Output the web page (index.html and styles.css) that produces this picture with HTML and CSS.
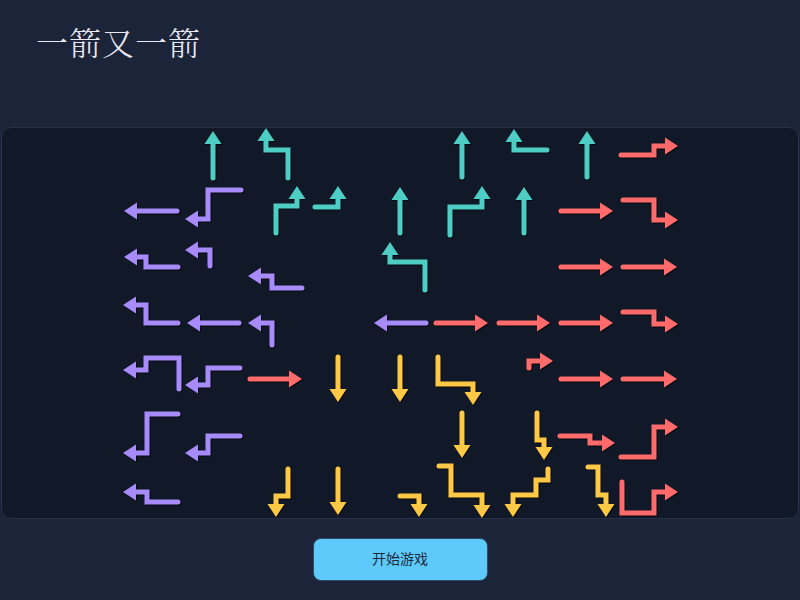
FILE: index.html
```html
<!DOCTYPE html>
<html lang="zh-CN">
<head>
    <meta charset="UTF-8">
    <meta name="viewport" content="width=device-width, initial-scale=1.0">
    <title>一箭又一箭</title>
    <link rel="stylesheet" href="styles.css">
</head>
<body>
    <h1 class="title">一箭又一箭</h1>

    <div class="board">
        <svg class="arrows" id="arrows" viewBox="2 128 796 390" width="796" height="390"></svg>
    </div>

    <div class="actions">
        <button class="start-btn" type="button">开始游戏</button>
    </div>

    <script>
        // 关卡数据：每支箭是一串折点，最后一个点是箭头尖
        const level = {
            '#4ecdc4': [
                [[213,180],[213,131]],
                [[288,180],[288,150],[266,150],[266,128]],
                [[276,235],[276,206],[297,206],[297,186]],
                [[313,207],[338,207],[338,186]],
                [[400,235],[400,187]],
                [[462,179],[462,131]],
                [[450,237],[450,207],[482,207],[482,186]],
                [[425,292],[425,262],[390,262],[390,242]],
                [[549,150],[514,150],[514,129]],
                [[587,179],[587,131]],
                [[524,235],[524,187]]
            ],
            '#a78bfa': [
                [[243,190],[208,190],[208,219],[185,219]],
                [[179,211],[124,211]],
                [[210,268],[210,250],[185,250]],
                [[180,267],[146,267],[146,257],[124,257]],
                [[304,288],[272,288],[272,276],[248,276]],
                [[180,323],[146,323],[146,305],[123,305]],
                [[241,323],[187,323]],
                [[272,347],[272,323],[248,323]],
                [[179,391],[179,358],[146,358],[146,370],[123,370]],
                [[242,368],[208,368],[208,385],[185,385]],
                [[428,323],[374,323]],
                [[180,414],[147,414],[147,453],[123,453]],
                [[242,436],[208,436],[208,453],[185,453]],
                [[180,502],[147,502],[147,492],[123,492]]
            ],
            '#ff6b6b': [
                [[619,155],[654,155],[654,146],[678,146]],
                [[559,211],[613,211]],
                [[621,200],[654,200],[654,220],[678,220]],
                [[559,267],[613,267]],
                [[621,267],[677,267]],
                [[434,323],[488,323]],
                [[497,323],[550,323]],
                [[559,323],[613,323]],
                [[621,312],[654,312],[654,324],[678,324]],
                [[529,370],[529,361],[553,361]],
                [[559,379],[613,379]],
                [[621,379],[677,379]],
                [[248,379],[302,379]],
                [[558,436],[590,436],[590,443],[615,443]],
                [[619,457],[654,457],[654,427],[678,427]],
                [[622,480],[622,513],[654,513],[654,492],[678,492]]
            ],
            '#ffc845': [
                [[338,355],[338,402]],
                [[400,355],[400,402]],
                [[438,355],[438,384],[473,384],[473,405]],
                [[462,411],[462,458]],
                [[338,467],[338,515]],
                [[398,496],[419,496],[419,517]],
                [[437,466],[451,466],[451,495],[482,495],[482,518]],
                [[288,467],[288,496],[276,496],[276,517]],
                [[537,411],[537,440],[544,440],[544,460]],
                [[548,467],[548,480],[536,480],[536,495],[513,495],[513,517]],
                [[586,467],[598,467],[598,495],[606,495],[606,517]]
            ]
        };

        const NS = 'http://www.w3.org/2000/svg';
        const HEAD_LEN = 13;
        const HEAD_HALF = 8.5;

        function drawArrow(svg, pts, color) {
            const tip = pts[pts.length - 1];
            const prev = pts[pts.length - 2];
            const dx = Math.sign(tip[0] - prev[0]);
            const dy = Math.sign(tip[1] - prev[1]);
            const base = [tip[0] - dx * HEAD_LEN, tip[1] - dy * HEAD_LEN];

            // 尾部往里收一点，给圆头留位置
            const first = pts[0], second = pts[1];
            const tx = Math.sign(second[0] - first[0]);
            const ty = Math.sign(second[1] - first[1]);
            const line = [[first[0] + tx * 2, first[1] + ty * 2]]
                .concat(pts.slice(1, -1))
                .concat([[base[0] + dx, base[1] + dy]]);

            const path = document.createElementNS(NS, 'path');
            path.setAttribute('d', 'M' + line.map(p => p.join(' ')).join(' L'));
            path.setAttribute('stroke', color);
            path.setAttribute('class', 'shaft');
            svg.appendChild(path);

            const head = document.createElementNS(NS, 'polygon');
            const nx = -dy, ny = dx;
            head.setAttribute('points', [
                tip,
                [base[0] + nx * HEAD_HALF, base[1] + ny * HEAD_HALF],
                [base[0] - nx * HEAD_HALF, base[1] - ny * HEAD_HALF]
            ].map(p => p.join(',')).join(' '));
            head.setAttribute('fill', color);
            svg.appendChild(head);
        }

        const svg = document.getElementById('arrows');
        Object.keys(level).forEach(color => {
            level[color].forEach(pts => drawArrow(svg, pts, color));
        });
    </script>
</body>
</html>
```

FILE: styles.css
```css
body {
    margin: 0;
    height: 600px;
    background-color: #1b2438;
    font-family: "Noto Sans CJK SC", sans-serif;
    overflow: hidden;
}
.title {
    margin: 0;
    padding: 21px 36px 0;
    font-family: "Noto Serif CJK SC", "Liberation Serif", "Noto Sans CJK SC", serif;
    font-size: 32px;
    font-weight: 300;
    line-height: 40px;
    letter-spacing: 1px;
    color: #ebe8f2;
}
.board {
    box-sizing: border-box;
    height: 392px;
    margin: 66px 1px 0;
    background-color: #111827;
    border: 1px solid #273248;
    border-radius: 10px;
    overflow: hidden;
}
.arrows {
    display: block;
    filter: drop-shadow(1px 1px 0 rgba(0, 0, 0, 0.6));
}
.arrows .shaft {
    fill: none;
    stroke-width: 5;
    stroke-linecap: round;
    stroke-linejoin: miter;
}
.actions {
    display: flex;
    justify-content: center;
    padding-top: 19px;
}
.start-btn {
    width: 175px;
    height: 43px;
    padding: 0 0 3px;
    background-color: #5dcafb;
    color: #1e293b;
    border: 1px solid #2f4a66;
    border-radius: 8px;
    font-family: "Noto Sans CJK SC", sans-serif;
    font-size: 14px;
    cursor: pointer;
}
```
